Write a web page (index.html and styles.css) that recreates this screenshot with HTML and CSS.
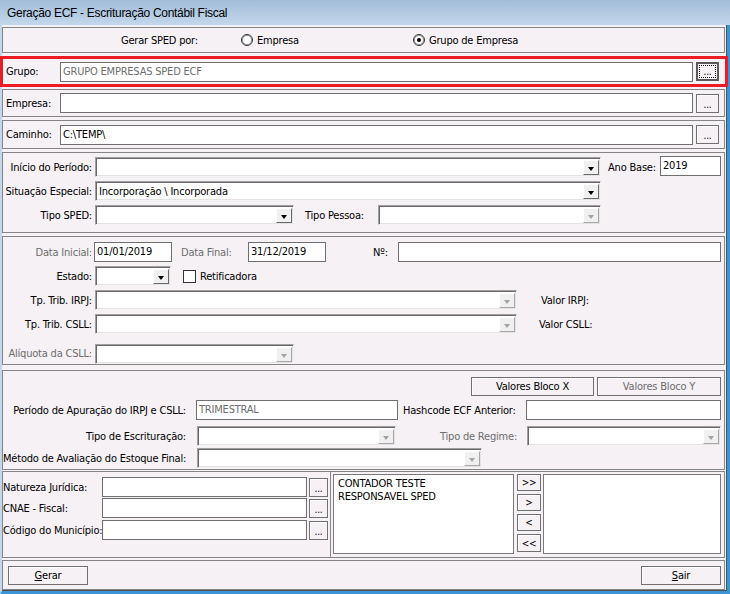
FILE: index.html
```html
<!DOCTYPE html>
<html lang="pt-BR">
<head>
<meta charset="utf-8">
<title>Geração ECF - Escrituração Contábil Fiscal</title>
<link rel="stylesheet" href="styles.css">
</head>
<body>
<div class="window">
  <div class="titlebar">Geração ECF - Escrituração Contábil Fiscal</div>
  <div class="frame">
    <div class="client">

      <div class="panel sped-by">
        <span class="sped-title">Gerar SPED por:</span>
        <span class="radio"><span class="radio-mark"></span>Empresa</span>
        <span class="radio"><span class="radio-mark is-checked"></span>Grupo de Empresa</span>
      </div>

      <div class="panel lookup lookup-grupo">
        <span class="lookup-label">Grupo:</span>
        <span class="edit lookup-edit is-readonly">GRUPO EMPRESAS SPED ECF</span>
        <span class="btn lookup-btn is-focused"><span class="focus-ring">...</span></span>
      </div>

      <div class="panel lookup lookup-empresa">
        <span class="lookup-label">Empresa:</span>
        <span class="edit lookup-edit"></span>
        <span class="btn lookup-btn">...</span>
      </div>

      <div class="panel lookup lookup-caminho">
        <span class="lookup-label">Caminho:</span>
        <span class="edit lookup-edit">C:\TEMP\</span>
        <span class="btn lookup-btn">...</span>
      </div>

      <div class="panel period">
        <div class="row">
          <span class="lbl lbl-main">Início do Período:</span>
          <span class="combo combo-506"><span class="combo-text"></span><span class="combo-arrow"></span></span>
          <span class="lbl ano-lbl">Ano Base:</span>
          <span class="edit ano-edit">2019</span>
        </div>
        <div class="row row-gap4">
          <span class="lbl lbl-main">Situação Especial:</span>
          <span class="combo combo-506"><span class="combo-text">Incorporação \ Incorporada</span><span class="combo-arrow"></span></span>
        </div>
        <div class="row row-gap4">
          <span class="lbl lbl-main">Tipo SPED:</span>
          <span class="combo combo-199"><span class="combo-text"></span><span class="combo-arrow"></span></span>
          <span class="lbl pessoa-lbl">Tipo Pessoa:</span>
          <span class="combo combo-223 is-disabled"><span class="combo-text"></span><span class="combo-arrow"></span></span>
        </div>
      </div>

      <div class="panel details">
        <div class="row">
          <span class="lbl lbl-main lbl-tight is-muted">Data Inicial:</span>
          <span class="edit date-edit">01/01/2019</span>
          <span class="lbl final-lbl is-muted">Data Final:</span>
          <span class="edit date-edit">31/12/2019</span>
          <span class="lbl num-lbl">Nº:</span>
          <span class="edit num-edit"></span>
        </div>
        <div class="row row-gap4">
          <span class="lbl lbl-main">Estado:</span>
          <span class="combo combo-76"><span class="combo-text"></span><span class="combo-arrow"></span></span>
          <span class="check"><span class="check-box"></span>Retificadora</span>
        </div>
        <div class="row row-gap4">
          <span class="lbl lbl-main">Tp. Trib. IRPJ:</span>
          <span class="combo combo-422 is-disabled"><span class="combo-text"></span><span class="combo-arrow"></span></span>
          <span class="lbl valor-irpj">Valor IRPJ:</span>
        </div>
        <div class="row row-gap4">
          <span class="lbl lbl-main">Tp. Trib. CSLL:</span>
          <span class="combo combo-422 is-disabled"><span class="combo-text"></span><span class="combo-arrow"></span></span>
          <span class="lbl valor-csll">Valor CSLL:</span>
        </div>
        <div class="row row-gap10 row-19">
          <span class="lbl lbl-main is-muted">Alíquota da CSLL:</span>
          <span class="combo combo-199 is-disabled"><span class="combo-text"></span><span class="combo-arrow"></span></span>
        </div>
      </div>

      <div class="panel apuracao">
        <div class="row row-19 row-end">
          <span class="btn bloco-btn">Valores Bloco X</span>
          <span class="btn bloco-btn bloco-y is-muted">Valores Bloco Y</span>
        </div>
        <div class="row row-gap4">
          <span class="lbl lbl-wide">Período de Apuração do IRPJ e CSLL:</span>
          <span class="edit periodo-edit is-readonly">TRIMESTRAL</span>
          <span class="lbl hash-lbl">Hashcode ECF Anterior:</span>
          <span class="edit hash-edit"></span>
        </div>
        <div class="row row-gap6">
          <span class="lbl lbl-wide">Tipo de Escrituração:</span>
          <span class="combo combo-199 combo-after-wide is-disabled"><span class="combo-text"></span><span class="combo-arrow"></span></span>
          <span class="lbl regime-lbl is-muted">Tipo de Regime:</span>
          <span class="combo combo-194 is-disabled"><span class="combo-text"></span><span class="combo-arrow"></span></span>
        </div>
        <div class="row row-gap2">
          <span class="lbl lbl-wide">Método de Avaliação do Estoque Final:</span>
          <span class="combo combo-285 combo-after-wide is-disabled"><span class="combo-text"></span><span class="combo-arrow"></span></span>
        </div>
      </div>

      <div class="panel cadastro">
        <div class="cadastro-left">
          <div class="row row-first">
            <span class="lbl cad-lbl">Natureza Jurídica:</span>
            <span class="edit cad-edit"></span>
            <span class="btn cad-btn">...</span>
          </div>
          <div class="row row-gap1">
            <span class="lbl cad-lbl">CNAE - Fiscal:</span>
            <span class="edit cad-edit"></span>
            <span class="btn cad-btn">...</span>
          </div>
          <div class="row row-gap2">
            <span class="lbl cad-lbl">Código do Município:</span>
            <span class="edit cad-edit"></span>
            <span class="btn cad-btn">...</span>
          </div>
        </div>
        <div class="cadastro-right">
          <div class="listbox list-source">
            <div class="list-item">CONTADOR TESTE</div>
            <div class="list-item">RESPONSAVEL SPED</div>
          </div>
          <div class="mover">
            <span class="btn move-btn">&gt;&gt;</span>
            <span class="btn move-btn">&gt;</span>
            <span class="btn move-btn">&lt;</span>
            <span class="btn move-btn move-last">&lt;&lt;</span>
          </div>
          <div class="listbox list-target"></div>
        </div>
      </div>

      <div class="panel actions">
        <span class="btn action-btn"><u>G</u>erar</span>
        <span class="btn action-btn"><u>S</u>air</span>
      </div>

    </div>
  </div>
</div>
</body>
</html>
```

FILE: styles.css
```css
* { box-sizing: border-box; }

html, body {
  margin: 0;
  padding: 0;
}

body {
  width: 730px;
  height: 594px;
  overflow: hidden;
  font-family: "DejaVu Sans Condensed", "Liberation Sans", sans-serif;
  font-size: 11px;
  letter-spacing: -0.2px;
  color: #000;
  background: #3b95d6;
}

.window {
  width: 730px;
  height: 594px;
  display: flex;
  flex-direction: column;
}

.titlebar {
  height: 25px;
  flex: none;
  background: linear-gradient(#a1bbd7, #c4d8ec);
  font-family: "Liberation Sans", sans-serif;
  font-size: 12px;
  letter-spacing: -0.3px;
  line-height: 26px;
  padding-left: 7px;
  color: #000;
}

.frame {
  flex: 1;
  display: flex;
  border-left: 2px solid #c4d8ec;
  border-right: 3px solid #3b95d6;
  border-bottom: 3px solid #3b95d6;
}

.client {
  flex: 1;
  display: flex;
  flex-direction: column;
  background: #f5f1f5;
  border-right: 1px solid #4f4f4f;
  border-bottom: 1px solid #4f4f4f;
  padding-right: 1px;
}

.panel {
  flex: none;
  border: 1px solid #858585;
}

/* generic rows */
.row {
  display: flex;
  align-items: center;
  height: 20px;
  flex: none;
}
.row-19 { height: 19px; }
.row-gap1 { margin-top: 1px; }
.row-gap2 { margin-top: 2px; }
.row-gap4 { margin-top: 4px; }
.row-gap6 { margin-top: 6px; }
.row-gap10 { margin-top: 10px; }
.row-end { justify-content: flex-end; }

.lbl {
  white-space: nowrap;
  flex: none;
}
.is-muted { color: #6d6d6d; }

/* controls */
.edit {
  display: block;
  flex: none;
  height: 20px;
  background: #fff;
  border: 1px solid #6f6f6f;
  padding: 0 2px;
  line-height: 18px;
  white-space: nowrap;
  overflow: hidden;
}
.edit.is-readonly { color: #6d6d6d; }

.combo {
  display: flex;
  flex: none;
  height: 20px;
  background: #fff;
  border: 1px solid;
  border-color: #a0a0a0 #f4f4f4 #f4f4f4 #a0a0a0;
  box-shadow: inset 1px 1px 0 #696969, inset -1px -1px 0 #e3e3e3;
  padding: 2px 1px 1px 2px;
  align-items: stretch;
}
.combo-text {
  flex: 1;
  line-height: 15px;
  padding-left: 1px;
  white-space: nowrap;
  overflow: hidden;
}
.combo-arrow {
  width: 16px;
  flex: none;
  background: #f0f0f0;
  border: 1px solid;
  border-color: #fff #696969 #696969 #fff;
  position: relative;
}
.combo-arrow::after {
  content: "";
  position: absolute;
  left: 50%;
  top: 6px;
  transform: translateX(-50%);
  border-left: 3.5px solid transparent;
  border-right: 3.5px solid transparent;
  border-top: 4px solid #000;
}
.combo.is-disabled .combo-arrow {
  border-color: #fff #a8a8a8 #a8a8a8 #fff;
}
.combo.is-disabled .combo-arrow::after { border-top-color: #a3a3a3; }

.btn {
  display: flex;
  align-items: center;
  justify-content: center;
  flex: none;
  background: #f5f1f5;
  border: 1px solid #707070;
  box-shadow: inset 1px 1px 0 #fff;
  white-space: nowrap;
}

/* Gerar SPED por */
.sped-by {
  height: 26px;
  margin-top: 2px;
  display: flex;
  align-items: center;
  padding-left: 118px;
}
.sped-title { width: 120px; flex: none; }
.radio {
  display: flex;
  align-items: center;
  width: 172px;
  flex: none;
}
.radio-mark {
  width: 12px;
  height: 12px;
  border-radius: 50%;
  border: 1px solid #2f2f2f;
  box-shadow: inset 0 0 0 1px #9a9a9a;
  background: #fff;
  margin-right: 4px;
  position: relative;
  flex: none;
}
.radio-mark.is-checked::after {
  content: "";
  position: absolute;
  left: 3px;
  top: 3px;
  width: 4px;
  height: 4px;
  border-radius: 50%;
  background: #000;
}

/* lookups */
.lookup {
  display: flex;
  align-items: center;
  padding-left: 3px;
}
.lookup-grupo {
  height: 31px;
  margin: 3px -3px 0 -2px;
  border: 3px solid #ed1c24;
}
.lookup-empresa { height: 28px; margin-top: 2px; }
.lookup-caminho { height: 29px; margin-top: 3px; }
.lookup-label { width: 54px; flex: none; }
.lookup-edit { width: 633px; }
.lookup-btn {
  width: 23px;
  height: 19px;
  margin-left: 3px;
  align-items: flex-end;
  padding-bottom: 3px;
  line-height: 8px;
  font-size: 10px;
}
.lookup-btn.is-focused {
  border: 2px solid #5a5a5a;
  box-shadow: none;
  padding: 1px;
  align-items: stretch;
}
.focus-ring {
  flex: 1;
  border: 1px dotted #000;
  display: flex;
  align-items: flex-end;
  justify-content: center;
  padding-bottom: 1px;
}

/* periodo */
.period {
  height: 81px;
  margin-top: 3px;
  padding: 4px 0 0 0;
}
.lbl-main {
  width: 89px;
  text-align: right;
  margin-right: 3px;
}
.lbl-main.lbl-tight { margin-right: 2px; }
.combo-506 { width: 506px; }
.combo-199 { width: 199px; }
.combo-223 { width: 223px; }
.combo-76 { width: 76px; }
.combo-422 { width: 422px; }
.combo-194 { width: 194px; }
.combo-285 { width: 285px; }
.ano-lbl { width: 52px; margin-left: 7px; }
.ano-edit { width: 61px; margin-top: -2px; }
.pessoa-lbl { width: 73px; margin-left: 11px; }

/* details */
.details {
  height: 129px;
  margin-top: 3px;
  padding: 5px 0 0 0;
}
.date-edit { width: 78px; }
.final-lbl { width: 67px; margin-left: 9px; }
.num-lbl { width: 25px; margin-left: 47px; }
.num-edit { width: 323px; }
.check {
  display: flex;
  align-items: center;
  margin-left: 12px;
}
.check-box {
  width: 13px;
  height: 13px;
  border: 1px solid #333;
  background: #fff;
  margin-right: 4px;
}
.valor-irpj { margin-left: 24px; }
.valor-csll { margin-left: 22px; }

/* apuracao */
.apuracao {
  height: 100px;
  margin-top: 5px;
  padding: 6px 3px 0 0;
}
.bloco-btn { width: 123px; height: 19px; }
.bloco-y { width: 124px; margin-left: 3px; }
.lbl-wide {
  width: 183px;
  text-align: right;
}
.periodo-edit { width: 202px; margin-left: 10px; }
.hash-lbl { width: 123px; margin-left: 5px; }
.hash-edit { width: 195px; }
.combo-after-wide { margin-left: 11px; }
.regime-lbl { width: 87px; margin-left: 44px; }

/* cadastro */
.cadastro {
  height: 87px;
  margin-top: 1px;
  display: flex;
}
.cadastro-left {
  width: 327px;
  flex: none;
  padding-top: 5px;
}
.row-first { margin-top: 0; }
.cad-lbl { width: 99px; }
.cad-edit { width: 205px; }
.cad-btn {
  width: 19px;
  height: 19px;
  margin-left: 2px;
  align-items: flex-end;
  padding-bottom: 3px;
  line-height: 8px;
  font-size: 10px;
}
.cadastro-right {
  flex: 1;
  display: flex;
  border-left: 1px solid #858585;
  padding: 2px 3px 0 2px;
}
.listbox {
  height: 80px;
  background: #fff;
  border: 1px solid #7a7a7a;
  padding: 2px 4px;
  flex: none;
}
.list-source { width: 181px; }
.list-target { width: 178px; margin-left: 2px; }
.list-item { line-height: 13px; white-space: nowrap; }
.mover {
  width: 24px;
  margin-left: 3px;
  display: flex;
  flex-direction: column;
  gap: 3px;
  flex: none;
}
.move-btn { height: 17px; font-size: 10px; }
.move-last { height: 18px; }

/* actions */
.actions {
  height: 30px;
  margin-top: 2px;
  display: flex;
  align-items: center;
  justify-content: space-between;
  padding: 0 3px 0 5px;
}
.action-btn { width: 80px; height: 19px; }
```
